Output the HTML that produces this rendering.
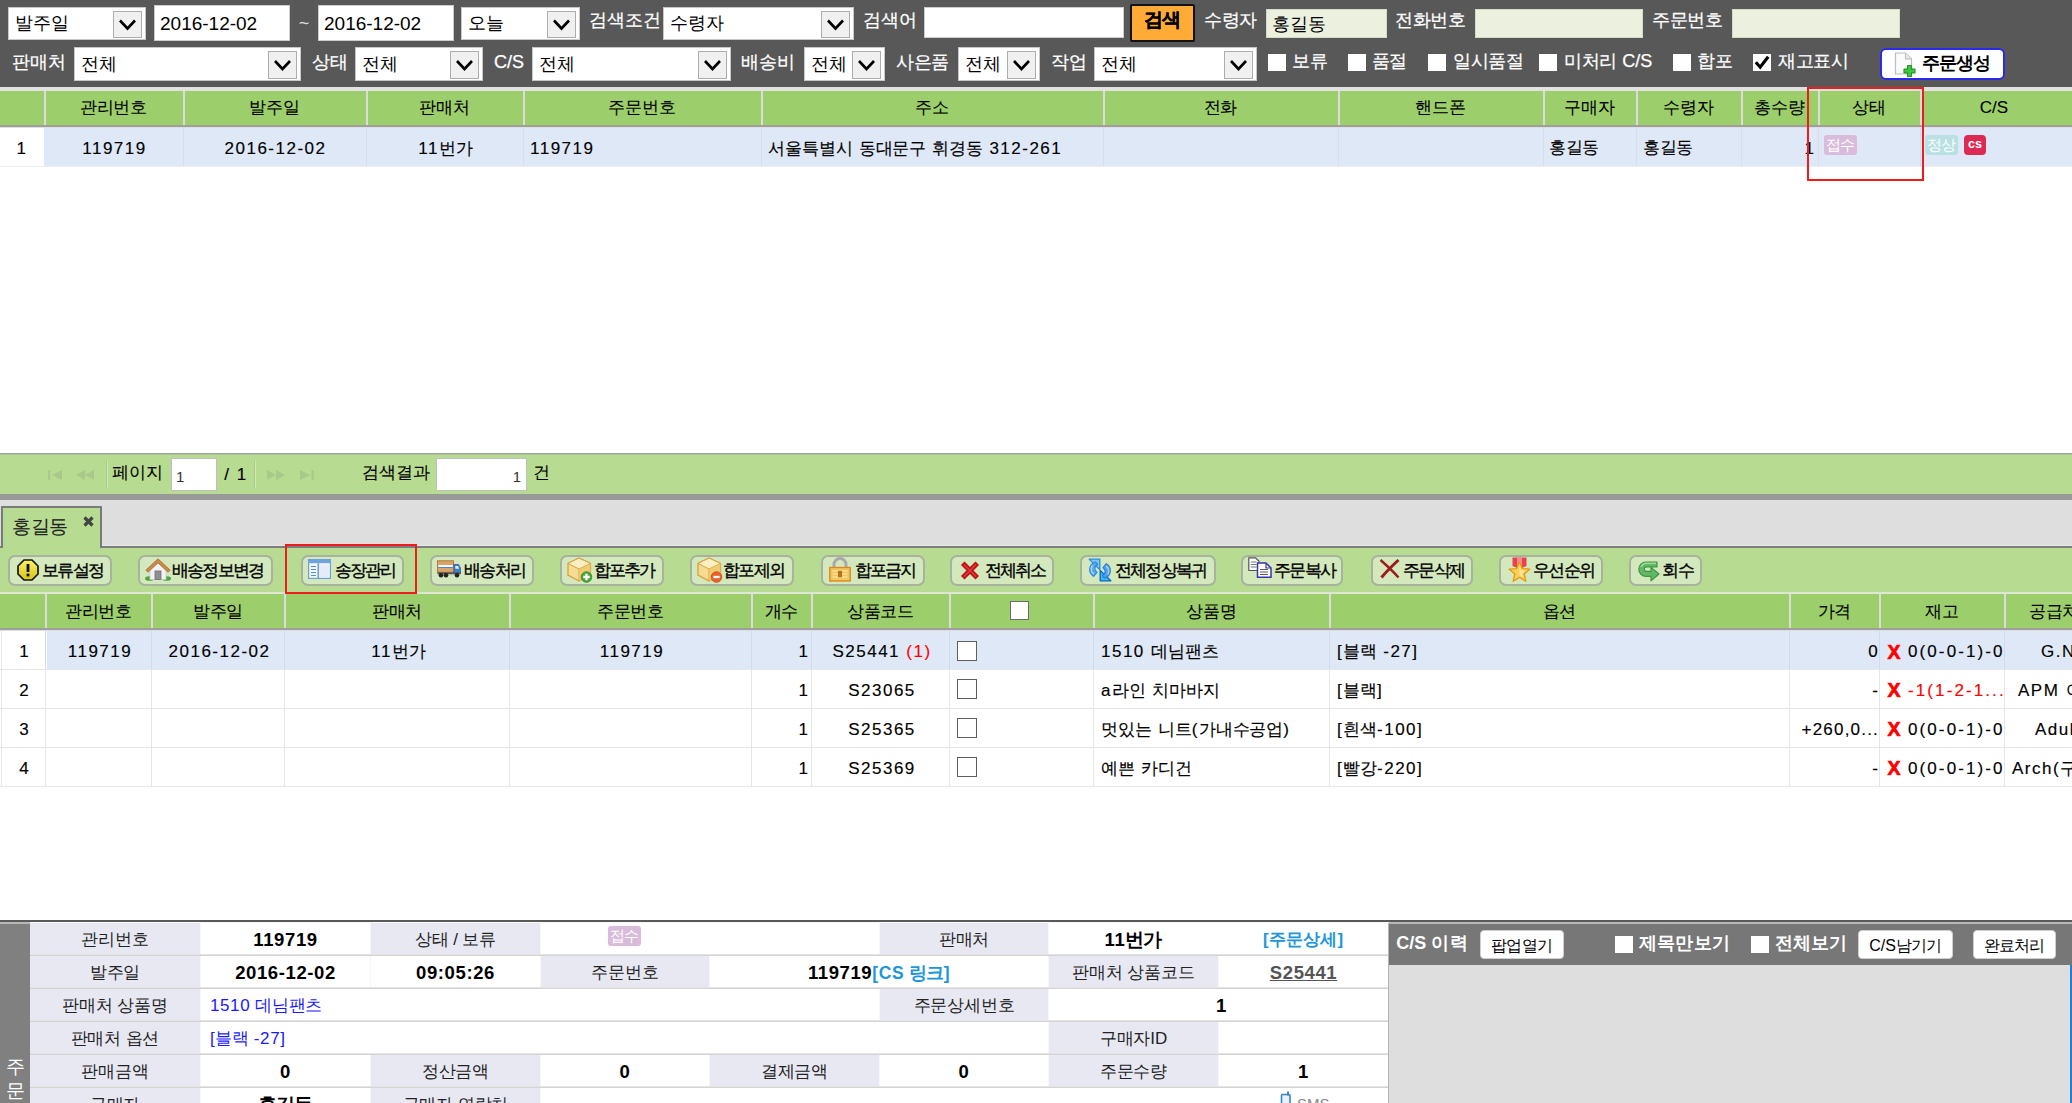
<!DOCTYPE html>
<html lang="ko"><head><meta charset="utf-8"><title>order</title>
<style>
html,body{margin:0;padding:0;}
body{width:2072px;height:1103px;overflow:hidden;background:#fff;position:relative;
 font-family:"Liberation Sans",sans-serif;color:#000;}
div{position:absolute;box-sizing:border-box;}
svg{position:absolute;overflow:visible;}
.t{white-space:nowrap;overflow:visible;text-align:center;font-size:17px;}
.t i{display:inline-flex;justify-content:center;width:var(--k,1em);font-style:normal;letter-spacing:0;}
.l{text-align:left;} .r{text-align:right;} .b{font-weight:bold;}
.w{color:#fff;}
.tb{--k:17.9px;font-size:18px;-webkit-text-stroke:0.25px currentColor;}            /* toolbar labels */
.in{--k:17.8px;font-size:19px;text-align:left;}   /* input values */
.g{--k:16.9px;font-size:17px;letter-spacing:1.5px;-webkit-text-stroke:0.15px currentColor;padding-top:1px;}  /* grid latin text (Verdana-ish metrics) */
.gk{--k:16.7px;font-size:17px;-webkit-text-stroke:0.1px currentColor;}            /* grid hangul text */
.sel{background:#fff;border:1px solid #c8c8c8;}
.dd{background:#f0f0f0;border:1px solid #adadad;}
.inp{background:#fff;border:1px solid #ccc;}
.ing{background:#ebf1de;border:1px solid #d5dcc5;}
.cb{background:#fff;}
.hs{background:#dcdcdc;width:2px;}   /* header separator */
.btn{background:#d3e9bd;border:2px solid rgba(140,146,138,0.62);border-radius:7px;}
.bt{--k:15.3px;font-size:16.5px;-webkit-text-stroke:0.35px #000;}
.red{color:#f00;}
</style></head>
<body>
<!-- sec_top -->
<div style="left:0px;top:0px;width:2072px;height:87px;background:#585858;"></div>
<div class="sel" style="left:8px;top:7px;width:138px;height:33px;"></div>
<div class="dd" style="left:113px;top:11px;width:29px;height:27px;"></div>
<svg style="left:0;top:0" width="1" height="1"><path d="M120.0 20.5 L127.5 28.5 L135.0 20.5" fill="none" stroke="#000" stroke-width="2.6"/></svg>
<div class="t in" style="left:15px;top:7px;width:98px;height:33px;line-height:33px;font-size:18px;"><i>발</i><i>주</i><i>일</i></div>
<div class="inp" style="left:154px;top:5px;width:136px;height:36px;"></div>
<div class="t in" style="left:160px;top:6px;width:130px;height:36px;line-height:36px;">2016-12-02</div>
<div class="t w" style="left:296px;top:5px;width:16px;height:36px;line-height:36px;font-size:18px;color:#ddd;">~</div>
<div class="inp" style="left:318px;top:5px;width:136px;height:36px;"></div>
<div class="t in" style="left:324px;top:6px;width:130px;height:36px;line-height:36px;">2016-12-02</div>
<div class="sel" style="left:461px;top:7px;width:119px;height:33px;"></div>
<div class="dd" style="left:547px;top:11px;width:29px;height:27px;"></div>
<svg style="left:0;top:0" width="1" height="1"><path d="M554.0 20.5 L561.5 28.5 L569.0 20.5" fill="none" stroke="#000" stroke-width="2.6"/></svg>
<div class="t in" style="left:468px;top:7px;width:79px;height:33px;line-height:33px;font-size:18px;"><i>오</i><i>늘</i></div>
<div class="t tb w" style="left:589px;top:2px;width:72px;height:36px;line-height:36px;"><i>검</i><i>색</i><i>조</i><i>건</i></div>
<div class="sel" style="left:663px;top:7px;width:191px;height:33px;"></div>
<div class="dd" style="left:821px;top:11px;width:29px;height:27px;"></div>
<svg style="left:0;top:0" width="1" height="1"><path d="M828.0 20.5 L835.5 28.5 L843.0 20.5" fill="none" stroke="#000" stroke-width="2.6"/></svg>
<div class="t in" style="left:670px;top:7px;width:151px;height:33px;line-height:33px;font-size:18px;"><i>수</i><i>령</i><i>자</i></div>
<div class="t tb w" style="left:863px;top:2px;width:53px;height:36px;line-height:36px;"><i>검</i><i>색</i><i>어</i></div>
<div class="inp" style="left:924px;top:7px;width:200px;height:31px;"></div>
<div style="left:1130px;top:4px;width:65px;height:38px;background:#ffab36;border:2px solid #111;border-radius:2px;"></div>
<div class="t tb b" style="left:1130px;top:1px;width:65px;height:37px;line-height:37px;font-size:19px;"><i>검</i><i>색</i></div>
<div class="t tb w" style="left:1203px;top:2px;width:55px;height:36px;line-height:36px;"><i>수</i><i>령</i><i>자</i></div>
<div class="ing" style="left:1266px;top:9px;width:121px;height:29px;"></div>
<div class="t in" style="left:1272px;top:9px;width:115px;height:30px;line-height:30px;font-size:18px;"><i>홍</i><i>길</i><i>동</i></div>
<div class="t tb w" style="left:1393px;top:2px;width:75px;height:36px;line-height:36px;"><i>전</i><i>화</i><i>번</i><i>호</i></div>
<div class="ing" style="left:1475px;top:9px;width:168px;height:29px;"></div>
<div class="t tb w" style="left:1650px;top:2px;width:75px;height:36px;line-height:36px;"><i>주</i><i>문</i><i>번</i><i>호</i></div>
<div class="ing" style="left:1732px;top:9px;width:168px;height:29px;"></div>
<div class="t tb w" style="left:12px;top:44px;width:54px;height:36px;line-height:36px;"><i>판</i><i>매</i><i>처</i></div>
<div class="sel" style="left:74px;top:47px;width:227px;height:34px;"></div>
<div class="dd" style="left:268px;top:51px;width:29px;height:28px;"></div>
<svg style="left:0;top:0" width="1" height="1"><path d="M275.0 61.0 L282.5 69.0 L290.0 61.0" fill="none" stroke="#000" stroke-width="2.6"/></svg>
<div class="t in" style="left:81px;top:47px;width:187px;height:34px;line-height:34px;font-size:18px;"><i>전</i><i>체</i></div>
<div class="t tb w" style="left:312px;top:44px;width:36px;height:36px;line-height:36px;"><i>상</i><i>태</i></div>
<div class="sel" style="left:355px;top:47px;width:128px;height:34px;"></div>
<div class="dd" style="left:450px;top:51px;width:29px;height:28px;"></div>
<svg style="left:0;top:0" width="1" height="1"><path d="M457.0 61.0 L464.5 69.0 L472.0 61.0" fill="none" stroke="#000" stroke-width="2.6"/></svg>
<div class="t in" style="left:362px;top:47px;width:88px;height:34px;line-height:34px;font-size:18px;"><i>전</i><i>체</i></div>
<div class="t tb w" style="left:494px;top:44px;width:30px;height:36px;line-height:36px;">C/S</div>
<div class="sel" style="left:532px;top:47px;width:199px;height:34px;"></div>
<div class="dd" style="left:698px;top:51px;width:29px;height:28px;"></div>
<svg style="left:0;top:0" width="1" height="1"><path d="M705.0 61.0 L712.5 69.0 L720.0 61.0" fill="none" stroke="#000" stroke-width="2.6"/></svg>
<div class="t in" style="left:539px;top:47px;width:159px;height:34px;line-height:34px;font-size:18px;"><i>전</i><i>체</i></div>
<div class="t tb w" style="left:741px;top:44px;width:54px;height:36px;line-height:36px;"><i>배</i><i>송</i><i>비</i></div>
<div class="sel" style="left:804px;top:47px;width:81px;height:34px;"></div>
<div class="dd" style="left:852px;top:51px;width:29px;height:28px;"></div>
<svg style="left:0;top:0" width="1" height="1"><path d="M859.0 61.0 L866.5 69.0 L874.0 61.0" fill="none" stroke="#000" stroke-width="2.6"/></svg>
<div class="t in" style="left:811px;top:47px;width:41px;height:34px;line-height:34px;font-size:18px;"><i>전</i><i>체</i></div>
<div class="t tb w" style="left:895px;top:44px;width:55px;height:36px;line-height:36px;"><i>사</i><i>은</i><i>품</i></div>
<div class="sel" style="left:958px;top:47px;width:82px;height:34px;"></div>
<div class="dd" style="left:1007px;top:51px;width:29px;height:28px;"></div>
<svg style="left:0;top:0" width="1" height="1"><path d="M1014.0 61.0 L1021.5 69.0 L1029.0 61.0" fill="none" stroke="#000" stroke-width="2.6"/></svg>
<div class="t in" style="left:965px;top:47px;width:42px;height:34px;line-height:34px;font-size:18px;"><i>전</i><i>체</i></div>
<div class="t tb w" style="left:1051px;top:44px;width:36px;height:36px;line-height:36px;"><i>작</i><i>업</i></div>
<div class="sel" style="left:1094px;top:47px;width:163px;height:34px;"></div>
<div class="dd" style="left:1224px;top:51px;width:29px;height:28px;"></div>
<svg style="left:0;top:0" width="1" height="1"><path d="M1231.0 61.0 L1238.5 69.0 L1246.0 61.0" fill="none" stroke="#000" stroke-width="2.6"/></svg>
<div class="t in" style="left:1101px;top:47px;width:123px;height:34px;line-height:34px;font-size:18px;"><i>전</i><i>체</i></div>
<div class="cb" style="left:1268px;top:54px;width:18px;height:17px;"></div>
<div class="t tb w" style="left:1291px;top:43px;width:38px;height:36px;line-height:36px;"><i>보</i><i>류</i></div>
<div class="cb" style="left:1348px;top:54px;width:18px;height:17px;"></div>
<div class="t tb w" style="left:1371px;top:43px;width:37px;height:36px;line-height:36px;"><i>품</i><i>절</i></div>
<div class="cb" style="left:1428px;top:54px;width:18px;height:17px;"></div>
<div class="t tb w" style="left:1452px;top:43px;width:73px;height:36px;line-height:36px;"><i>일</i><i>시</i><i>품</i><i>절</i></div>
<div class="cb" style="left:1539px;top:54px;width:18px;height:17px;"></div>
<div class="t tb w" style="left:1561px;top:43px;width:94px;height:36px;line-height:36px;"><i>미</i><i>처</i><i>리</i> C/S</div>
<div class="cb" style="left:1673px;top:54px;width:18px;height:17px;"></div>
<div class="t tb w" style="left:1696px;top:43px;width:38px;height:36px;line-height:36px;"><i>합</i><i>포</i></div>
<div class="cb" style="left:1753px;top:54px;width:18px;height:17px;"></div>
<svg style="left:1753px;top:54px" width="18" height="17"><path d="M2.8 8.3 L7.2 13.2 L15.2 2.8" fill="none" stroke="#000" stroke-width="3.1"/></svg>
<div class="t tb w" style="left:1776px;top:43px;width:75px;height:36px;line-height:36px;"><i>재</i><i>고</i><i>표</i><i>시</i></div>
<div style="left:1880px;top:48px;width:125px;height:32px;background:#fff;border:2px solid #2a2aee;border-radius:6px;"></div>
<svg style="left:1894px;top:52px" width="22" height="25" viewBox="0 0 22 25"><path d="M1.5 1 H11.5 L17.5 7 V22 H1.5 Z" fill="#fafafa" stroke="#b9bcc0" stroke-width="1.2"/><path d="M11.5 1 V7 H17.5" fill="#e4e6e8" stroke="#b9bcc0" stroke-width="1"/><path d="M13.6 13.5 H17.4 V17.1 H21 V20.9 H17.4 V24.5 H13.6 V20.9 H10 V17.1 H13.6 Z" fill="#43c443" stroke="#1f9a22" stroke-width="1.1" stroke-linejoin="round"/></svg>
<div class="t b" style="left:1921px;top:47px;width:71px;height:33px;line-height:33px;--k:16.8px;font-size:17.5px;"><i>주</i><i>문</i><i>생</i><i>성</i></div>
<!-- sec_grid1 -->
<div style="left:0px;top:87px;width:2072px;height:4px;background:#e2e2e2;"></div>
<div style="left:0px;top:91px;width:2072px;height:34px;background:#9ccf6b;"></div>
<div style="left:0px;top:125px;width:2072px;height:2px;background:#9f9f9f;"></div>
<div style="left:0px;top:127px;width:2072px;height:1px;background:#dedede;"></div>
<div class="hs" style="left:44px;top:91px;width:2px;height:34px;"></div>
<div class="hs" style="left:183px;top:91px;width:2px;height:34px;"></div>
<div class="hs" style="left:366px;top:91px;width:2px;height:34px;"></div>
<div class="hs" style="left:523px;top:91px;width:2px;height:34px;"></div>
<div class="hs" style="left:761px;top:91px;width:2px;height:34px;"></div>
<div class="hs" style="left:1103px;top:91px;width:2px;height:34px;"></div>
<div class="hs" style="left:1338px;top:91px;width:2px;height:34px;"></div>
<div class="hs" style="left:1543px;top:91px;width:2px;height:34px;"></div>
<div class="hs" style="left:1636px;top:91px;width:2px;height:34px;"></div>
<div class="hs" style="left:1741px;top:91px;width:2px;height:34px;"></div>
<div class="hs" style="left:1818px;top:91px;width:2px;height:34px;"></div>
<div class="hs" style="left:1920px;top:91px;width:2px;height:34px;"></div>
<div class="t gk" style="left:45px;top:91px;width:137px;height:34px;line-height:34px;"><i>관</i><i>리</i><i>번</i><i>호</i></div>
<div class="t gk" style="left:184px;top:91px;width:181px;height:34px;line-height:34px;"><i>발</i><i>주</i><i>일</i></div>
<div class="t gk" style="left:367px;top:91px;width:155px;height:34px;line-height:34px;"><i>판</i><i>매</i><i>처</i></div>
<div class="t gk" style="left:524px;top:91px;width:236px;height:34px;line-height:34px;"><i>주</i><i>문</i><i>번</i><i>호</i></div>
<div class="t gk" style="left:762px;top:91px;width:340px;height:34px;line-height:34px;"><i>주</i><i>소</i></div>
<div class="t gk" style="left:1104px;top:91px;width:233px;height:34px;line-height:34px;"><i>전</i><i>화</i></div>
<div class="t gk" style="left:1339px;top:91px;width:203px;height:34px;line-height:34px;"><i>핸</i><i>드</i><i>폰</i></div>
<div class="t gk" style="left:1544px;top:91px;width:91px;height:34px;line-height:34px;"><i>구</i><i>매</i><i>자</i></div>
<div class="t gk" style="left:1637px;top:91px;width:103px;height:34px;line-height:34px;"><i>수</i><i>령</i><i>자</i></div>
<div class="t gk" style="left:1742px;top:91px;width:75px;height:34px;line-height:34px;"><i>총</i><i>수</i><i>량</i></div>
<div class="t gk" style="left:1819px;top:91px;width:100px;height:34px;line-height:34px;"><i>상</i><i>태</i></div>
<div class="t gk" style="left:1921px;top:91px;width:146px;height:34px;line-height:34px;">C/S</div>
<div style="left:44px;top:128px;width:2028px;height:38px;background:#dfe8f6;"></div>
<div style="left:0px;top:166px;width:2072px;height:1px;background:#ededed;"></div>
<div style="left:183px;top:128px;width:1px;height:38px;background:#d6deea;"></div>
<div style="left:366px;top:128px;width:1px;height:38px;background:#d6deea;"></div>
<div style="left:523px;top:128px;width:1px;height:38px;background:#d6deea;"></div>
<div style="left:761px;top:128px;width:1px;height:38px;background:#d6deea;"></div>
<div style="left:1103px;top:128px;width:1px;height:38px;background:#d6deea;"></div>
<div style="left:1338px;top:128px;width:1px;height:38px;background:#d6deea;"></div>
<div style="left:1543px;top:128px;width:1px;height:38px;background:#d6deea;"></div>
<div style="left:1636px;top:128px;width:1px;height:38px;background:#d6deea;"></div>
<div style="left:1741px;top:128px;width:1px;height:38px;background:#d6deea;"></div>
<div style="left:1818px;top:128px;width:1px;height:38px;background:#d6deea;"></div>
<div style="left:1920px;top:128px;width:1px;height:38px;background:#d6deea;"></div>
<div class="t g" style="left:0px;top:129px;width:44px;height:38px;line-height:38px;">1</div>
<div class="t g" style="left:46px;top:129px;width:137px;height:38px;line-height:38px;">119719</div>
<div class="t g" style="left:185px;top:129px;width:181px;height:38px;line-height:38px;">2016-12-02</div>
<div class="t g" style="left:368px;top:129px;width:155px;height:38px;line-height:38px;">11<i>번</i><i>가</i></div>
<div class="t g l" style="left:530px;top:129px;width:231px;height:38px;line-height:38px;">119719</div>
<div class="t g l" style="left:768px;top:129px;width:335px;height:38px;line-height:38px;"><i>서</i><i>울</i><i>특</i><i>별</i><i>시</i> <i>동</i><i>대</i><i>문</i><i>구</i> <i>휘</i><i>경</i><i>동</i> 312-261</div>
<div class="t gk l" style="left:1549px;top:129px;width:87px;height:38px;line-height:38px;"><i>홍</i><i>길</i><i>동</i></div>
<div class="t gk l" style="left:1643px;top:129px;width:98px;height:38px;line-height:38px;"><i>홍</i><i>길</i><i>동</i></div>
<div class="t g r" style="left:1743px;top:129px;width:71px;height:38px;line-height:38px;letter-spacing:0;">1</div>
<div class="t" style="left:1824px;top:135px;width:33px;height:20px;line-height:20px;--k:14.3px;border-radius:3px;color:#fff;font-size:15px;background:#d9bcdb;"><i>접</i><i>수</i></div>
<div class="t" style="left:1925px;top:135px;width:33px;height:20px;line-height:20px;--k:14.3px;border-radius:3px;color:#fff;font-size:15px;background:#b9e0e2;"><i>정</i><i>상</i></div>
<div class="t b" style="left:1964px;top:135px;width:22px;height:20px;line-height:20px;--k:14.3px;border-radius:3px;color:#fff;font-size:15px;background:#dc2a55;font-size:12.5px;border-radius:4px;line-height:18px;">cs</div>
<div style="left:1807px;top:87px;width:117px;height:94px;border:2px solid #ee1c1c;"></div>
<div style="left:0px;top:453px;width:2072px;height:1px;background:#a0a0a0;"></div>
<div style="left:0px;top:454px;width:2072px;height:40px;background:#b7db90;"></div>
<div style="left:0px;top:454px;width:2072px;height:1px;background:#adc49a;"></div>
<div style="left:0px;top:494px;width:2072px;height:6px;background:#999;"></div>
<svg style="left:0;top:0" width="1" height="1"><rect x="48" y="470" width="2.2" height="10" fill="#a9c98b"/><path d="M62 470 L52 475 L62 480 Z" fill="#a9c98b"/><path d="M85 470 L76 475 L85 480 Z M94 470 L85 475 L94 480 Z" fill="#a9c98b"/><path d="M267 470 L276 475 L267 480 Z M276 470 L285 475 L276 480 Z" fill="#a9c98b"/><path d="M300 470 L310 475 L300 480 Z" fill="#a9c98b"/><rect x="311.5" y="470" width="2.2" height="10" fill="#a9c98b"/></svg>
<div style="left:106px;top:461px;width:1px;height:27px;background:#a7c98a;"></div>
<div style="left:107px;top:461px;width:1px;height:27px;background:#cfe8b6;"></div>
<div style="left:254px;top:461px;width:1px;height:27px;background:#a7c98a;"></div>
<div style="left:255px;top:461px;width:1px;height:27px;background:#cfe8b6;"></div>
<div class="t gk" style="left:112px;top:454px;width:51px;height:37px;line-height:37px;"><i>페</i><i>이</i><i>지</i></div>
<div style="left:171px;top:458px;width:46px;height:33px;background:#fff;border:1px solid #bfbfbf;"></div>
<div class="t l" style="left:176px;top:460px;width:41px;height:34px;line-height:34px;font-size:15px;color:#333;">1</div>
<div class="t g" style="left:224px;top:455px;width:24px;height:37px;line-height:37px;">/ 1</div>
<div class="t gk" style="left:362px;top:454px;width:68px;height:37px;line-height:37px;"><i>검</i><i>색</i><i>결</i><i>과</i></div>
<div style="left:436px;top:458px;width:91px;height:33px;background:#fff;border:1px solid #bfbfbf;"></div>
<div class="t r" style="left:436px;top:460px;width:85px;height:34px;line-height:34px;font-size:15px;color:#333;">1</div>
<div class="t gk" style="left:533px;top:454px;width:16px;height:37px;line-height:37px;"><i>건</i></div>
<!-- sec_mid -->
<div style="left:0px;top:500px;width:2072px;height:46px;background:#dedede;"></div>
<div style="left:0px;top:545px;width:2072px;height:1px;background:#e8e8e8;"></div>
<div style="left:0px;top:546px;width:2072px;height:2px;background:#7d7d7d;"></div>
<div style="left:0px;top:548px;width:2072px;height:44px;background:#b7db90;"></div>
<div style="left:0px;top:592px;width:2072px;height:2px;background:#dfe6d6;"></div>
<div style="left:1px;top:506px;width:101px;height:42px;background:#b7db90;border:2px solid #7a7a7a;border-bottom:none;border-radius:1px 1px 0 0;"></div>
<div class="t gk" style="left:10px;top:507px;width:60px;height:39px;line-height:39px;--k:18.2px;font-size:19px;color:#222;"><i>홍</i><i>길</i><i>동</i></div>
<svg style="left:83px;top:516px" width="11" height="11" viewBox="0 0 11 11"><path d="M1.5 1.5 L9.5 9.5 M9.5 1.5 L1.5 9.5" stroke="#444" stroke-width="3.2"/></svg>
<div class="btn" style="left:8px;top:555px;width:104px;height:31px;"></div>
<svg style="left:17px;top:559px" width="22" height="22" viewBox="0 0 22 22"><defs><linearGradient id="gw" x1="0" y1="0" x2="0" y2="1"><stop offset="0" stop-color="#fbf26a"/><stop offset="1" stop-color="#d8c415"/></linearGradient></defs><path d="M7 1 H15 L21 7 V15 L15 21 H7 L1 15 V7 Z" fill="url(#gw)" stroke="#151515" stroke-width="1.7"/><rect x="9.6" y="5" width="2.8" height="8" fill="#111"/><rect x="9.6" y="14.6" width="2.8" height="2.8" fill="#111"/></svg>
<div class="t bt" style="left:43px;top:554px;width:61px;height:33px;line-height:33px;"><i>보</i><i>류</i><i>설</i><i>정</i></div>
<div class="btn" style="left:138px;top:555px;width:135px;height:31px;"></div>
<svg style="left:145px;top:558px" width="26" height="23" viewBox="0 0 26 23"><ellipse cx="4.5" cy="20.5" rx="4.5" ry="2.3" fill="#4ea33a"/><ellipse cx="21.5" cy="20.5" rx="4.5" ry="2.3" fill="#4ea33a"/><path d="M5 11 L13 3.5 L21 11 V21.5 H5 Z" fill="#f2f2f4" stroke="#c9c9cf" stroke-width="0.8"/><path d="M0.8 12.2 L13 0.8 L25.2 12.2 L23 14.2 L13 4.9 L3 14.2 Z" fill="#c98a4d" stroke="#a9692f" stroke-width="0.8"/><rect x="10" y="13" width="6" height="8.5" fill="#8f8f93" stroke="#6f6f74" stroke-width="0.8"/></svg>
<div class="t bt" style="left:172px;top:554px;width:93px;height:33px;line-height:33px;"><i>배</i><i>송</i><i>정</i><i>보</i><i>변</i><i>경</i></div>
<div class="btn" style="left:301px;top:555px;width:103px;height:31px;"></div>
<svg style="left:308px;top:559px" width="23" height="20" viewBox="0 0 23 20"><rect x="0.6" y="0.6" width="21.8" height="18.8" fill="#f4f8fd" stroke="#6f9fd6" stroke-width="1.2"/><rect x="0.6" y="0.6" width="21.8" height="3.6" fill="#6fa3df"/><rect x="9.5" y="4.2" width="1.6" height="15" fill="#6f9fd6"/><rect x="11.5" y="5.5" width="9.5" height="12.5" fill="#e3ecf8"/><path d="M3 7.5 H8 M3 10.5 H8 M3 13.5 H8 M3 16.5 H8" stroke="#4a90d9" stroke-width="1.1"/></svg>
<div class="t bt" style="left:335px;top:554px;width:62px;height:33px;line-height:33px;"><i>송</i><i>장</i><i>관</i><i>리</i></div>
<div class="btn" style="left:430px;top:555px;width:104px;height:31px;"></div>
<svg style="left:437px;top:560px" width="24" height="18" viewBox="0 0 24 18"><rect x="0.5" y="0.8" width="16" height="11.5" fill="#d9a468" stroke="#b07a3c" stroke-width="1"/><rect x="1.2" y="5" width="14.6" height="2" fill="#f7f7f7"/><rect x="1.2" y="7" width="14.6" height="1" fill="#4a88d0"/><path d="M17 4.5 H21.5 L23.5 8 V13.5 H17 Z" fill="#3f7fd0" stroke="#2a5ca8" stroke-width="0.8"/><path d="M18.3 6 H21 L22 8.8 H18.3 Z" fill="#dfeaf8"/><rect x="0.5" y="12.3" width="23" height="2" fill="#555"/><circle cx="4" cy="15.2" r="2.3" fill="#222"/><circle cx="9" cy="15.2" r="2.3" fill="#222"/><circle cx="20" cy="15.2" r="2.3" fill="#222"/></svg>
<div class="t bt" style="left:465px;top:554px;width:61px;height:33px;line-height:33px;"><i>배</i><i>송</i><i>처</i><i>리</i></div>
<div class="btn" style="left:560px;top:555px;width:104px;height:31px;"></div>
<svg style="left:567px;top:557px" width="26" height="26" viewBox="0 0 26 26"><path d="M12 1 L23.5 6.5 V18 L12 24 L1 18 V6.5 Z" fill="#f6dc92" stroke="#d9a13c" stroke-width="1.3"/><path d="M1 6.5 L12 12 L23.5 6.5 L12 1 Z" fill="#fbeec2" stroke="#d9a13c" stroke-width="1"/><path d="M12 12 V24" stroke="#d9a13c" stroke-width="1"/><path d="M12 12 L23.5 6.5 V18 L12 24 Z" fill="#eec66a" opacity="0.75"/><circle cx="19.5" cy="20" r="5.3" fill="#4aa43a" stroke="#3a8a2c" stroke-width="0.8"/><path d="M19.5 16.8 V23.2 M16.3 20 H22.7" stroke="#fff" stroke-width="2.3"/></svg>
<div class="t bt" style="left:594px;top:554px;width:62px;height:33px;line-height:33px;"><i>합</i><i>포</i><i>추</i><i>가</i></div>
<div class="btn" style="left:690px;top:555px;width:104px;height:31px;"></div>
<svg style="left:697px;top:557px" width="26" height="26" viewBox="0 0 26 26"><path d="M12 1 L23.5 6.5 V18 L12 24 L1 18 V6.5 Z" fill="#f6dc92" stroke="#d9a13c" stroke-width="1.3"/><path d="M1 6.5 L12 12 L23.5 6.5 L12 1 Z" fill="#fbeec2" stroke="#d9a13c" stroke-width="1"/><path d="M12 12 V24" stroke="#d9a13c" stroke-width="1"/><path d="M12 12 L23.5 6.5 V18 L12 24 Z" fill="#eec66a" opacity="0.75"/><circle cx="19.5" cy="20" r="5.3" fill="#e8622a" stroke="#c94c1c" stroke-width="0.8"/><path d="M16.4 20 H22.6" stroke="#fff" stroke-width="2.3"/></svg>
<div class="t bt" style="left:724px;top:554px;width:61px;height:33px;line-height:33px;"><i>합</i><i>포</i><i>제</i><i>외</i></div>
<div class="btn" style="left:821px;top:555px;width:104px;height:31px;"></div>
<svg style="left:829px;top:557px" width="22" height="25" viewBox="0 0 22 25"><path d="M5 11 V7.5 A6 6 0 0 1 17 7.5 V11" fill="none" stroke="#a9a9ad" stroke-width="3"/><rect x="0.8" y="10.5" width="20.4" height="13.5" fill="#f5c55c" stroke="#d98b1f" stroke-width="1.4"/><path d="M3.5 14 H18.5 M3.5 17 H18.5 M3.5 20 H18.5" stroke="#fbe29c" stroke-width="1.3"/><rect x="9" y="13.8" width="4" height="6.4" fill="#b5711b"/></svg>
<div class="t bt" style="left:855px;top:554px;width:62px;height:33px;line-height:33px;"><i>합</i><i>포</i><i>금</i><i>지</i></div>
<div class="btn" style="left:950px;top:555px;width:104px;height:31px;"></div>
<svg style="left:960px;top:561px" width="20" height="19" viewBox="0 0 20 19"><path d="M4.5 4 L15.5 15 M15.5 4 L4.5 15" stroke="#bd1216" stroke-width="5" stroke-linecap="square"/><path d="M4.5 4 L15.5 15 M15.5 4 L4.5 15" stroke="#dc3a3c" stroke-width="1.6" stroke-linecap="square"/></svg>
<div class="t bt" style="left:985px;top:554px;width:62px;height:33px;line-height:33px;"><i>전</i><i>체</i><i>취</i><i>소</i></div>
<div class="btn" style="left:1080px;top:555px;width:136px;height:31px;"></div>
<svg style="left:1084px;top:554px" width="32" height="32" viewBox="0 0 32 32"><path d="M5.2 5.2 H15.8 V15.6 Z" fill="#7cc6f6" stroke="#2f8be0" stroke-width="1.3" stroke-linejoin="round"/><path d="M11.5 8 C4.5 10.5 3.8 18.5 9.6 22.3 L13 18.3 C9.8 16 10.2 12.2 13.6 10.4 Z" fill="#5aa9ea" stroke="#2f86dc" stroke-width="1.2" stroke-linejoin="round"/><path d="M8.3 11.5 C6.6 14.5 7.2 18 9.8 20" stroke="#a3d4f7" stroke-width="1.6" fill="none"/><path d="M26.8 26.8 H16.2 V16.4 Z" fill="#35bdfb" stroke="#0f62c0" stroke-width="1.3" stroke-linejoin="round"/><path d="M20.5 24 C27.5 21.5 28.2 13.5 22.4 9.7 L19 13.7 C22.2 16 21.8 19.8 18.4 21.6 Z" fill="#4ea2e8" stroke="#2a7ed6" stroke-width="1.2" stroke-linejoin="round"/><path d="M23.7 20.5 C25.4 17.5 24.8 14 22.2 12" stroke="#9dd0f6" stroke-width="1.6" fill="none"/></svg>
<div class="t bt" style="left:1115px;top:554px;width:93px;height:33px;line-height:33px;"><i>전</i><i>체</i><i>정</i><i>상</i><i>복</i><i>귀</i></div>
<div class="btn" style="left:1241px;top:555px;width:102px;height:31px;"></div>
<svg style="left:1248px;top:557px" width="24" height="21" viewBox="0 0 24 21"><path d="M0.8 0.8 H7.5 L11 4.3 V13.5 H0.8 Z" fill="#fff" stroke="#555" stroke-width="1.2"/><path d="M2.8 5 H8.5 M2.8 7.5 H8.5 M2.8 10 H8.5" stroke="#777" stroke-width="1"/><path d="M9.5 6 H18 L23 11 V20.2 H9.5 Z" fill="#fff" stroke="#3a35a8" stroke-width="1.5"/><path d="M18 6 V11 H23" fill="none" stroke="#3a35a8" stroke-width="1.2"/><path d="M12 12.5 H20 M12 15 H20 M12 17.5 H20" stroke="#555" stroke-width="1.1"/></svg>
<div class="t bt" style="left:1275px;top:554px;width:61px;height:33px;line-height:33px;"><i>주</i><i>문</i><i>복</i><i>사</i></div>
<div class="btn" style="left:1371px;top:555px;width:102px;height:31px;"></div>
<svg style="left:1379px;top:559px" width="21" height="20" viewBox="0 0 21 20"><path d="M1.5 1 C6 5 13 11 19.5 18.5" stroke="#9b1b1f" stroke-width="2.4" fill="none"/><path d="M19.5 1 C13 7 7 13 2.5 18.5" stroke="#9b1b1f" stroke-width="3" fill="none"/></svg>
<div class="t bt" style="left:1404px;top:554px;width:61px;height:33px;line-height:33px;"><i>주</i><i>문</i><i>삭</i><i>제</i></div>
<div class="btn" style="left:1499px;top:555px;width:104px;height:31px;"></div>
<svg style="left:1508px;top:557px" width="23" height="26" viewBox="0 0 23 26"><path d="M4.5 0.5 H18.5 V9 L11.5 12 L4.5 9 Z" fill="#e8434d"/><path d="M9 0.5 H14 V10 H9 Z" fill="#f58a90"/><path d="M11.5 5 L14.3 11.6 L21.8 12.2 L16.1 17 L17.9 24.3 L11.5 20.4 L5.1 24.3 L6.9 17 L1.2 12.2 L8.7 11.6 Z" fill="#fbd15a" stroke="#e59a14" stroke-width="1.3" stroke-linejoin="round"/><path d="M11.5 9 L13.2 13.2 L17.5 13.6 L14.2 16.4 L15.2 20.6 L11.5 18.3 Z" fill="#fdeaa5" opacity="0.85"/></svg>
<div class="t bt" style="left:1534px;top:554px;width:61px;height:33px;line-height:33px;"><i>우</i><i>선</i><i>순</i><i>위</i></div>
<div class="btn" style="left:1629px;top:555px;width:73px;height:31px;"></div>
<svg style="left:1637px;top:560px" width="23" height="22" viewBox="0 0 23 22"><path d="M20 2 H9 A7.2 7.2 0 0 0 9 16.4 H14 V20.8 L22 14 L14 7.4 V11.4 H9.5 A2.3 2.3 0 0 1 9.5 6.8 H20 Z" fill="#62b865" stroke="#3d9642" stroke-width="1.2" stroke-linejoin="round"/><path d="M19 3.4 H9 A5.8 5.8 0 0 0 4 7" stroke="#a8dba9" stroke-width="1.2" fill="none"/></svg>
<div class="t bt" style="left:1662px;top:554px;width:33px;height:33px;line-height:33px;"><i>회</i><i>수</i></div>
<div style="left:285px;top:544px;width:132px;height:50px;border:2px solid #ee1c1c;"></div>
<!-- sec_grid2 -->
<div style="left:0px;top:594px;width:2072px;height:34px;background:#9ccf6b;"></div>
<div style="left:0px;top:628px;width:2072px;height:2px;background:#9f9f9f;"></div>
<div style="left:0px;top:630px;width:2072px;height:1px;background:#dedede;"></div>
<div class="hs" style="left:45px;top:594px;width:2px;height:34px;"></div>
<div class="hs" style="left:151px;top:594px;width:2px;height:34px;"></div>
<div class="hs" style="left:284px;top:594px;width:2px;height:34px;"></div>
<div class="hs" style="left:509px;top:594px;width:2px;height:34px;"></div>
<div class="hs" style="left:751px;top:594px;width:2px;height:34px;"></div>
<div class="hs" style="left:811px;top:594px;width:2px;height:34px;"></div>
<div class="hs" style="left:949px;top:594px;width:2px;height:34px;"></div>
<div class="hs" style="left:1093px;top:594px;width:2px;height:34px;"></div>
<div class="hs" style="left:1329px;top:594px;width:2px;height:34px;"></div>
<div class="hs" style="left:1789px;top:594px;width:2px;height:34px;"></div>
<div class="hs" style="left:1879px;top:594px;width:2px;height:34px;"></div>
<div class="hs" style="left:2004px;top:594px;width:2px;height:34px;"></div>
<div class="t gk" style="left:46px;top:594px;width:105px;height:35px;line-height:35px;"><i>관</i><i>리</i><i>번</i><i>호</i></div>
<div class="t gk" style="left:152px;top:594px;width:132px;height:35px;line-height:35px;"><i>발</i><i>주</i><i>일</i></div>
<div class="t gk" style="left:285px;top:594px;width:224px;height:35px;line-height:35px;"><i>판</i><i>매</i><i>처</i></div>
<div class="t gk" style="left:510px;top:594px;width:241px;height:35px;line-height:35px;"><i>주</i><i>문</i><i>번</i><i>호</i></div>
<div class="t gk" style="left:752px;top:594px;width:59px;height:35px;line-height:35px;"><i>개</i><i>수</i></div>
<div class="t gk" style="left:812px;top:594px;width:137px;height:35px;line-height:35px;"><i>상</i><i>품</i><i>코</i><i>드</i></div>
<div class="t gk" style="left:1094px;top:594px;width:235px;height:35px;line-height:35px;"><i>상</i><i>품</i><i>명</i></div>
<div class="t gk" style="left:1330px;top:594px;width:459px;height:35px;line-height:35px;"><i>옵</i><i>션</i></div>
<div class="t gk" style="left:1790px;top:594px;width:89px;height:35px;line-height:35px;"><i>가</i><i>격</i></div>
<div class="t gk" style="left:1880px;top:594px;width:124px;height:35px;line-height:35px;"><i>재</i><i>고</i></div>
<div class="t gk" style="left:2005px;top:594px;width:98px;height:35px;line-height:35px;"><i>공</i><i>급</i><i>처</i></div>
<div style="left:1010px;top:601px;width:19px;height:19px;background:#fff;border:1.5px solid #6b6b6b;"></div>
<div style="left:47px;top:631px;width:2025px;height:38px;background:#dfe8f6;"></div>
<div style="left:0px;top:669px;width:2072px;height:1px;background:#e6e6e6;"></div>
<div style="left:0px;top:708px;width:2072px;height:1px;background:#e6e6e6;"></div>
<div style="left:0px;top:747px;width:2072px;height:1px;background:#e6e6e6;"></div>
<div style="left:0px;top:786px;width:2072px;height:1px;background:#e6e6e6;"></div>
<div style="left:1px;top:631px;width:1px;height:155px;background:#e6e6e6;"></div>
<div style="left:45px;top:631px;width:1px;height:38px;background:#d3dbe8;"></div>
<div style="left:45px;top:669px;width:1px;height:117px;background:#e6e6e6;"></div>
<div style="left:151px;top:631px;width:1px;height:38px;background:#d3dbe8;"></div>
<div style="left:151px;top:669px;width:1px;height:117px;background:#e6e6e6;"></div>
<div style="left:284px;top:631px;width:1px;height:38px;background:#d3dbe8;"></div>
<div style="left:284px;top:669px;width:1px;height:117px;background:#e6e6e6;"></div>
<div style="left:509px;top:631px;width:1px;height:38px;background:#d3dbe8;"></div>
<div style="left:509px;top:669px;width:1px;height:117px;background:#e6e6e6;"></div>
<div style="left:751px;top:631px;width:1px;height:38px;background:#d3dbe8;"></div>
<div style="left:751px;top:669px;width:1px;height:117px;background:#e6e6e6;"></div>
<div style="left:811px;top:631px;width:1px;height:38px;background:#d3dbe8;"></div>
<div style="left:811px;top:669px;width:1px;height:117px;background:#e6e6e6;"></div>
<div style="left:949px;top:631px;width:1px;height:38px;background:#d3dbe8;"></div>
<div style="left:949px;top:669px;width:1px;height:117px;background:#e6e6e6;"></div>
<div style="left:1093px;top:631px;width:1px;height:38px;background:#d3dbe8;"></div>
<div style="left:1093px;top:669px;width:1px;height:117px;background:#e6e6e6;"></div>
<div style="left:1329px;top:631px;width:1px;height:38px;background:#d3dbe8;"></div>
<div style="left:1329px;top:669px;width:1px;height:117px;background:#e6e6e6;"></div>
<div style="left:1789px;top:631px;width:1px;height:38px;background:#d3dbe8;"></div>
<div style="left:1789px;top:669px;width:1px;height:117px;background:#e6e6e6;"></div>
<div style="left:1879px;top:631px;width:1px;height:38px;background:#d3dbe8;"></div>
<div style="left:1879px;top:669px;width:1px;height:117px;background:#e6e6e6;"></div>
<div style="left:2004px;top:631px;width:1px;height:38px;background:#d3dbe8;"></div>
<div style="left:2004px;top:669px;width:1px;height:117px;background:#e6e6e6;"></div>
<div class="t g" style="left:2px;top:632px;width:44px;height:38px;line-height:38px;letter-spacing:0;">1</div>
<div class="t g" style="left:48px;top:632px;width:104px;height:38px;line-height:38px;">119719</div>
<div class="t g" style="left:154px;top:632px;width:131px;height:38px;line-height:38px;">2016-12-02</div>
<div class="t g" style="left:287px;top:632px;width:223px;height:38px;line-height:38px;">11<i>번</i><i>가</i></div>
<div class="t g" style="left:512px;top:632px;width:240px;height:38px;line-height:38px;">119719</div>
<div class="t g r" style="left:754px;top:632px;width:54px;height:38px;line-height:38px;letter-spacing:0;">1</div>
<div class="t g" style="left:814px;top:632px;width:136px;height:38px;line-height:38px;">S25441 <span class="red">(1)</span></div>
<div style="left:957px;top:641px;width:20px;height:20px;background:#fff;border:1.5px solid #5f5f5f;"></div>
<div class="t g l" style="left:1101px;top:632px;width:229px;height:38px;line-height:38px;">1510 <i>데</i><i>님</i><i>팬</i><i>츠</i></div>
<div class="t g l" style="left:1337px;top:632px;width:453px;height:38px;line-height:38px;">[<i>블</i><i>랙</i> -27]</div>
<div class="t g r" style="left:1792px;top:632px;width:87px;height:38px;line-height:38px;letter-spacing:1.2px;">0</div>
<div class="t b red" style="left:1886px;top:632px;width:16px;height:38px;line-height:38px;font-size:19.5px;-webkit-text-stroke:0.7px #f00;padding-top:1px;">X</div>
<div class="t g l" style="left:1908px;top:632px;width:97px;height:38px;line-height:38px;letter-spacing:2.1px;">0(0-0-1)-0</div>
<div class="t g l" style="left:2041px;top:632px;width:99px;height:38px;line-height:38px;">G.N</div>
<div class="t g" style="left:2px;top:670px;width:44px;height:39px;line-height:39px;letter-spacing:0;">2</div>
<div class="t g r" style="left:754px;top:670px;width:54px;height:39px;line-height:39px;letter-spacing:0;">1</div>
<div class="t g" style="left:814px;top:670px;width:136px;height:39px;line-height:39px;">S23065</div>
<div style="left:957px;top:679px;width:20px;height:20px;background:#fff;border:1.5px solid #5f5f5f;"></div>
<div class="t g l" style="left:1101px;top:670px;width:229px;height:39px;line-height:39px;">a<i>라</i><i>인</i> <i>치</i><i>마</i><i>바</i><i>지</i></div>
<div class="t g l" style="left:1337px;top:670px;width:453px;height:39px;line-height:39px;">[<i>블</i><i>랙</i>]</div>
<div class="t g r" style="left:1792px;top:670px;width:87px;height:39px;line-height:39px;letter-spacing:1.2px;">-</div>
<div class="t b red" style="left:1886px;top:670px;width:16px;height:39px;line-height:39px;font-size:19.5px;-webkit-text-stroke:0.7px #f00;padding-top:1px;">X</div>
<div class="t g l red" style="left:1908px;top:670px;width:97px;height:39px;line-height:39px;letter-spacing:2.1px;">-1(1-2-1...</div>
<div class="t g l" style="left:2018px;top:670px;width:122px;height:39px;line-height:39px;">APM <i>여</i></div>
<div class="t g" style="left:2px;top:709px;width:44px;height:39px;line-height:39px;letter-spacing:0;">3</div>
<div class="t g r" style="left:754px;top:709px;width:54px;height:39px;line-height:39px;letter-spacing:0;">1</div>
<div class="t g" style="left:814px;top:709px;width:136px;height:39px;line-height:39px;">S25365</div>
<div style="left:957px;top:718px;width:20px;height:20px;background:#fff;border:1.5px solid #5f5f5f;"></div>
<div class="t g l" style="left:1101px;top:709px;width:229px;height:39px;line-height:39px;"><i>멋</i><i>있</i><i>는</i> <i>니</i><i>트</i>(<i>가</i><i>내</i><i>수</i><i>공</i><i>업</i>)</div>
<div class="t g l" style="left:1337px;top:709px;width:453px;height:39px;line-height:39px;">[<i>흰</i><i>색</i>-100]</div>
<div class="t g r" style="left:1792px;top:709px;width:87px;height:39px;line-height:39px;letter-spacing:1.2px;">+260,0...</div>
<div class="t b red" style="left:1886px;top:709px;width:16px;height:39px;line-height:39px;font-size:19.5px;-webkit-text-stroke:0.7px #f00;padding-top:1px;">X</div>
<div class="t g l" style="left:1908px;top:709px;width:97px;height:39px;line-height:39px;letter-spacing:2.1px;">0(0-0-1)-0</div>
<div class="t g l" style="left:2035px;top:709px;width:105px;height:39px;line-height:39px;">Adult</div>
<div class="t g" style="left:2px;top:748px;width:44px;height:39px;line-height:39px;letter-spacing:0;">4</div>
<div class="t g r" style="left:754px;top:748px;width:54px;height:39px;line-height:39px;letter-spacing:0;">1</div>
<div class="t g" style="left:814px;top:748px;width:136px;height:39px;line-height:39px;">S25369</div>
<div style="left:957px;top:757px;width:20px;height:20px;background:#fff;border:1.5px solid #5f5f5f;"></div>
<div class="t g l" style="left:1101px;top:748px;width:229px;height:39px;line-height:39px;"><i>예</i><i>쁜</i> <i>카</i><i>디</i><i>건</i></div>
<div class="t g l" style="left:1337px;top:748px;width:453px;height:39px;line-height:39px;">[<i>빨</i><i>강</i>-220]</div>
<div class="t g r" style="left:1792px;top:748px;width:87px;height:39px;line-height:39px;letter-spacing:1.2px;">-</div>
<div class="t b red" style="left:1886px;top:748px;width:16px;height:39px;line-height:39px;font-size:19.5px;-webkit-text-stroke:0.7px #f00;padding-top:1px;">X</div>
<div class="t g l" style="left:1908px;top:748px;width:97px;height:39px;line-height:39px;letter-spacing:2.1px;">0(0-0-1)-0</div>
<div class="t g l" style="left:2012px;top:748px;width:128px;height:39px;line-height:39px;">Arch(<i>구</i></div>
<!-- sec_bottom -->
<div style="left:0px;top:920px;width:2072px;height:2px;background:#5a5a5a;"></div>
<div style="left:0px;top:922px;width:2072px;height:2px;background:#b9b9b9;"></div>
<div style="left:0px;top:924px;width:30px;height:179px;background:#808080;"></div>
<div class="t w" style="left:0px;top:1054px;width:30px;height:26px;line-height:26px;--k:18px;font-size:18.5px;"><i>주</i></div>
<div class="t w" style="left:0px;top:1078px;width:30px;height:26px;line-height:26px;--k:18px;font-size:18.5px;"><i>문</i></div>
<div style="left:30px;top:922px;width:1359px;height:181px;background:#f7f7f7;"></div>
<div style="left:30px;top:923px;width:170px;height:31px;background:#e8e8f3;"></div>
<div class="t" style="left:30px;top:924px;width:170px;height:32px;line-height:32px;--k:16.8px;font-size:17px;color:#222;"><i>관</i><i>리</i><i>번</i><i>호</i></div>
<div style="left:201px;top:923px;width:169px;height:31px;background:#fff;"></div>
<div class="t b" style="left:201px;top:924px;width:169px;height:32px;line-height:32px;--k:18px;font-size:18.5px;letter-spacing:0.6px;">119719</div>
<div style="left:371px;top:923px;width:169px;height:31px;background:#e8e8f3;"></div>
<div class="t" style="left:371px;top:924px;width:169px;height:32px;line-height:32px;--k:16.8px;font-size:17px;color:#222;"><i>상</i><i>태</i> / <i>보</i><i>류</i></div>
<div style="left:541px;top:923px;width:338px;height:31px;background:#fff;"></div>
<div style="left:880px;top:923px;width:168px;height:31px;background:#e8e8f3;"></div>
<div class="t" style="left:880px;top:924px;width:168px;height:32px;line-height:32px;--k:16.8px;font-size:17px;color:#222;"><i>판</i><i>매</i><i>처</i></div>
<div style="left:1049px;top:923px;width:339px;height:31px;background:#fff;"></div>
<div class="t b" style="left:1048px;top:924px;width:170px;height:31px;line-height:31px;--k:18px;font-size:18.5px;letter-spacing:0.6px;">11<i>번</i><i>가</i></div>
<div class="t b" style="left:1218px;top:924px;width:170px;height:31px;line-height:31px;--k:17.2px;font-size:17px;color:#2196d8;">[<i>주</i><i>문</i><i>상</i><i>세</i>]</div>
<div class="t" style="left:608px;top:926px;width:33px;height:20px;line-height:20px;--k:14.3px;border-radius:3px;color:#fff;font-size:15px;background:#d9bcdb;"><i>접</i><i>수</i></div>
<div style="left:30px;top:956px;width:170px;height:31px;background:#e8e8f3;"></div>
<div class="t" style="left:30px;top:957px;width:170px;height:32px;line-height:32px;--k:16.8px;font-size:17px;color:#222;"><i>발</i><i>주</i><i>일</i></div>
<div style="left:201px;top:956px;width:169px;height:31px;background:#fff;"></div>
<div class="t b" style="left:201px;top:957px;width:169px;height:32px;line-height:32px;--k:18px;font-size:18.5px;letter-spacing:0.6px;">2016-12-02</div>
<div style="left:371px;top:956px;width:169px;height:31px;background:#fff;"></div>
<div class="t b" style="left:371px;top:957px;width:169px;height:32px;line-height:32px;--k:18px;font-size:18.5px;letter-spacing:0.6px;">09:05:26</div>
<div style="left:541px;top:956px;width:168px;height:31px;background:#e8e8f3;"></div>
<div class="t" style="left:541px;top:957px;width:168px;height:32px;line-height:32px;--k:16.8px;font-size:17px;color:#222;"><i>주</i><i>문</i><i>번</i><i>호</i></div>
<div style="left:710px;top:956px;width:338px;height:31px;background:#fff;"></div>
<div class="t b" style="left:710px;top:957px;width:338px;height:32px;line-height:32px;--k:18px;font-size:18.5px;letter-spacing:0.6px;">119719<span style="color:#2196d8;font-size:17.5px;--k:17px">[CS <i>링</i><i>크</i>]</span></div>
<div style="left:1049px;top:956px;width:169px;height:31px;background:#e8e8f3;"></div>
<div class="t" style="left:1049px;top:957px;width:169px;height:32px;line-height:32px;--k:16.8px;font-size:17px;color:#222;"><i>판</i><i>매</i><i>처</i> <i>상</i><i>품</i><i>코</i><i>드</i></div>
<div style="left:1219px;top:956px;width:169px;height:31px;background:#fff;"></div>
<div class="t b" style="left:1219px;top:957px;width:169px;height:32px;line-height:32px;--k:18px;font-size:18.5px;letter-spacing:0.6px;color:#555;text-decoration:underline;">S25441</div>
<div style="left:30px;top:989px;width:170px;height:31px;background:#e8e8f3;"></div>
<div class="t" style="left:30px;top:990px;width:170px;height:32px;line-height:32px;--k:16.8px;font-size:17px;color:#222;"><i>판</i><i>매</i><i>처</i> <i>상</i><i>품</i><i>명</i></div>
<div style="left:201px;top:989px;width:678px;height:31px;background:#fff;"></div>
<div class="t l" style="left:210px;top:990px;width:669px;height:32px;line-height:32px;--k:18px;font-size:18.5px;letter-spacing:0.6px;--k:16.6px;font-size:17px;color:#1a1aff;">1510 <i>데</i><i>님</i><i>팬</i><i>츠</i></div>
<div style="left:880px;top:989px;width:168px;height:31px;background:#e8e8f3;"></div>
<div class="t" style="left:880px;top:990px;width:168px;height:32px;line-height:32px;--k:16.8px;font-size:17px;color:#222;"><i>주</i><i>문</i><i>상</i><i>세</i><i>번</i><i>호</i></div>
<div style="left:1049px;top:989px;width:339px;height:31px;background:#fff;"></div>
<div class="t b" style="left:1049px;top:990px;width:339px;height:32px;line-height:32px;--k:18px;font-size:18.5px;letter-spacing:0.6px;padding-left:6px;">1</div>
<div style="left:30px;top:1022px;width:170px;height:31px;background:#e8e8f3;"></div>
<div class="t" style="left:30px;top:1023px;width:170px;height:32px;line-height:32px;--k:16.8px;font-size:17px;color:#222;"><i>판</i><i>매</i><i>처</i> <i>옵</i><i>션</i></div>
<div style="left:201px;top:1022px;width:847px;height:31px;background:#fff;"></div>
<div class="t l" style="left:210px;top:1023px;width:838px;height:32px;line-height:32px;--k:18px;font-size:18.5px;letter-spacing:0.6px;--k:16.6px;font-size:17px;color:#1a1aff;">[<i>블</i><i>랙</i> -27]</div>
<div style="left:1049px;top:1022px;width:169px;height:31px;background:#e8e8f3;"></div>
<div class="t" style="left:1049px;top:1023px;width:169px;height:32px;line-height:32px;--k:16.8px;font-size:17px;color:#222;"><i>구</i><i>매</i><i>자</i>ID</div>
<div style="left:1219px;top:1022px;width:169px;height:31px;background:#fff;"></div>
<div style="left:30px;top:1055px;width:170px;height:31px;background:#e8e8f3;"></div>
<div class="t" style="left:30px;top:1056px;width:170px;height:32px;line-height:32px;--k:16.8px;font-size:17px;color:#222;"><i>판</i><i>매</i><i>금</i><i>액</i></div>
<div style="left:201px;top:1055px;width:169px;height:31px;background:#fff;"></div>
<div class="t b" style="left:201px;top:1056px;width:169px;height:32px;line-height:32px;--k:18px;font-size:18.5px;letter-spacing:0.6px;">0</div>
<div style="left:371px;top:1055px;width:169px;height:31px;background:#e8e8f3;"></div>
<div class="t" style="left:371px;top:1056px;width:169px;height:32px;line-height:32px;--k:16.8px;font-size:17px;color:#222;"><i>정</i><i>산</i><i>금</i><i>액</i></div>
<div style="left:541px;top:1055px;width:168px;height:31px;background:#fff;"></div>
<div class="t b" style="left:541px;top:1056px;width:168px;height:32px;line-height:32px;--k:18px;font-size:18.5px;letter-spacing:0.6px;">0</div>
<div style="left:710px;top:1055px;width:169px;height:31px;background:#e8e8f3;"></div>
<div class="t" style="left:710px;top:1056px;width:169px;height:32px;line-height:32px;--k:16.8px;font-size:17px;color:#222;"><i>결</i><i>제</i><i>금</i><i>액</i></div>
<div style="left:880px;top:1055px;width:168px;height:31px;background:#fff;"></div>
<div class="t b" style="left:880px;top:1056px;width:168px;height:32px;line-height:32px;--k:18px;font-size:18.5px;letter-spacing:0.6px;">0</div>
<div style="left:1049px;top:1055px;width:169px;height:31px;background:#e8e8f3;"></div>
<div class="t" style="left:1049px;top:1056px;width:169px;height:32px;line-height:32px;--k:16.8px;font-size:17px;color:#222;"><i>주</i><i>문</i><i>수</i><i>량</i></div>
<div style="left:1219px;top:1055px;width:169px;height:31px;background:#fff;"></div>
<div class="t b" style="left:1219px;top:1056px;width:169px;height:32px;line-height:32px;--k:18px;font-size:18.5px;letter-spacing:0.6px;">1</div>
<div style="left:30px;top:1088px;width:170px;height:31px;background:#e8e8f3;"></div>
<div class="t" style="left:30px;top:1089px;width:170px;height:32px;line-height:32px;--k:16.8px;font-size:17px;color:#222;"><i>구</i><i>매</i><i>자</i></div>
<div style="left:201px;top:1088px;width:169px;height:31px;background:#fff;"></div>
<div class="t b" style="left:201px;top:1089px;width:169px;height:32px;line-height:32px;--k:18px;font-size:18.5px;letter-spacing:0.6px;"><i>홍</i><i>길</i><i>동</i></div>
<div style="left:371px;top:1088px;width:169px;height:31px;background:#e8e8f3;"></div>
<div class="t" style="left:371px;top:1089px;width:169px;height:32px;line-height:32px;--k:16.8px;font-size:17px;color:#222;"><i>구</i><i>매</i><i>자</i> <i>연</i><i>락</i><i>처</i></div>
<div style="left:541px;top:1088px;width:847px;height:31px;background:#fff;"></div>
<svg style="left:1280px;top:1091px" width="12" height="14"><rect x="1.5" y="3.5" width="8.5" height="12" rx="1" fill="#e9f1fa" stroke="#3b84c9" stroke-width="1.6"/><rect x="7" y="0.5" width="2" height="4" fill="#3b84c9"/></svg>
<div class="t l" style="left:1297px;top:1092px;width:35px;height:24px;line-height:24px;font-size:15px;color:#8a8a8a;">SMS</div>
<div style="left:30px;top:954px;width:1358px;height:1px;background:#e4e4e4;"></div>
<div style="left:30px;top:955px;width:1358px;height:1px;background:#d4d4d4;"></div>
<div style="left:30px;top:987px;width:1358px;height:1px;background:#e4e4e4;"></div>
<div style="left:30px;top:988px;width:1358px;height:1px;background:#d4d4d4;"></div>
<div style="left:30px;top:1020px;width:1358px;height:1px;background:#e4e4e4;"></div>
<div style="left:30px;top:1021px;width:1358px;height:1px;background:#d4d4d4;"></div>
<div style="left:30px;top:1053px;width:1358px;height:1px;background:#e4e4e4;"></div>
<div style="left:30px;top:1054px;width:1358px;height:1px;background:#d4d4d4;"></div>
<div style="left:30px;top:1086px;width:1358px;height:1px;background:#e4e4e4;"></div>
<div style="left:30px;top:1087px;width:1358px;height:1px;background:#d4d4d4;"></div>
<div style="left:1388px;top:923px;width:1px;height:180px;background:#b4b4b4;"></div>
<div style="left:1389px;top:924px;width:683px;height:41px;background:#777;"></div>
<div style="left:1389px;top:965px;width:683px;height:138px;background:#dedede;"></div>
<div style="left:2070px;top:965px;width:2px;height:138px;background:#1e7fd8;"></div>
<div class="t b w" style="left:1395px;top:924px;width:74px;height:39px;line-height:39px;--k:18.2px;font-size:18px;">C/S <i>이</i><i>력</i></div>
<div style="left:1480px;top:930px;width:84px;height:29px;background:#fff;border:1px solid #cfcfcf;border-radius:4px;"></div>
<div class="t" style="left:1480px;top:931px;width:84px;height:30px;line-height:30px;--k:15.3px;font-size:16px;"><i>팝</i><i>업</i><i>열</i><i>기</i></div>
<div style="left:1615px;top:936px;width:18px;height:17px;background:#fff;"></div>
<div class="t b w" style="left:1638px;top:924px;width:93px;height:39px;line-height:39px;--k:18.3px;font-size:18px;"><i>제</i><i>목</i><i>만</i><i>보</i><i>기</i></div>
<div style="left:1751px;top:936px;width:18px;height:17px;background:#fff;"></div>
<div class="t b w" style="left:1774px;top:924px;width:74px;height:39px;line-height:39px;--k:18.3px;font-size:18px;"><i>전</i><i>체</i><i>보</i><i>기</i></div>
<div style="left:1858px;top:930px;width:95px;height:29px;background:#fff;border:1px solid #cfcfcf;border-radius:4px;"></div>
<div class="t" style="left:1858px;top:931px;width:95px;height:30px;line-height:30px;--k:15.3px;font-size:16px;">C/S<i>남</i><i>기</i><i>기</i></div>
<div style="left:1973px;top:930px;width:83px;height:29px;background:#fff;border:1px solid #cfcfcf;border-radius:4px;"></div>
<div class="t" style="left:1973px;top:931px;width:83px;height:30px;line-height:30px;--k:15.3px;font-size:16px;"><i>완</i><i>료</i><i>처</i><i>리</i></div>
</body></html>
